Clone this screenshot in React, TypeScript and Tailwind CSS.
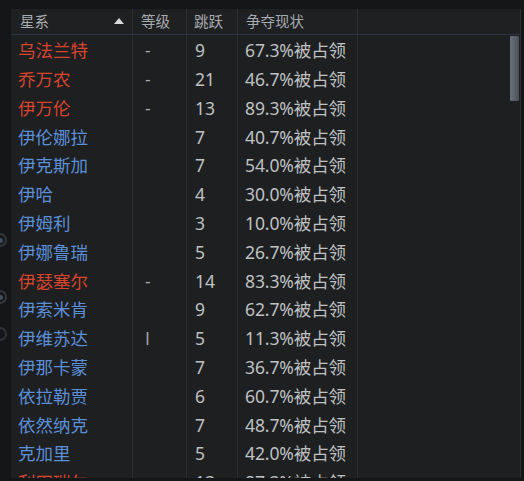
const rows: { name: string; red?: boolean; level: string; jumps: number; status: string }[] = [
  { name: '乌法兰特', red: true, level: '-', jumps: 9, status: '67.3%被占领' },
  { name: '乔万农', red: true, level: '-', jumps: 21, status: '46.7%被占领' },
  { name: '伊万伦', red: true, level: '-', jumps: 13, status: '89.3%被占领' },
  { name: '伊伦娜拉', level: '', jumps: 7, status: '40.7%被占领' },
  { name: '伊克斯加', level: '', jumps: 7, status: '54.0%被占领' },
  { name: '伊哈', level: '', jumps: 4, status: '30.0%被占领' },
  { name: '伊姆利', level: '', jumps: 3, status: '10.0%被占领' },
  { name: '伊娜鲁瑞', level: '', jumps: 5, status: '26.7%被占领' },
  { name: '伊瑟塞尔', red: true, level: '-', jumps: 14, status: '83.3%被占领' },
  { name: '伊索米肯', level: '', jumps: 9, status: '62.7%被占领' },
  { name: '伊维苏达', level: 'I', jumps: 5, status: '11.3%被占领' },
  { name: '伊那卡蒙', level: '', jumps: 7, status: '36.7%被占领' },
  { name: '依拉勒贾', level: '', jumps: 6, status: '60.7%被占领' },
  { name: '依然纳克', level: '', jumps: 7, status: '48.7%被占领' },
  { name: '克加里', level: '', jumps: 5, status: '42.0%被占领' },
  { name: '利田瑞尔', red: true, level: '', jumps: 13, status: '87.3%被占领' },
];

const cols = 'grid grid-cols-[122px_54px_51px_120px_1fr]';

export default function App() {
  return (
    <div
      className="relative h-[481px] w-[524px] overflow-hidden bg-[#151617]"
      style={{ fontFamily: '"Noto Sans", "Noto Sans CJK SC", sans-serif' }}
    >
      {/* faint icons peeking on the left edge */}
      <div className="absolute left-[-7px] top-[233px] flex h-[14px] w-[14px] items-center justify-center rounded-full border-2 border-[#33373b]">
        <div className="h-[5px] w-[5px] rounded-full bg-[#3d4f66]" />
      </div>
      <div className="absolute left-[-7px] top-[290px] flex h-[14px] w-[14px] items-center justify-center rounded-full border-2 border-[#33373b]">
        <div className="h-[5px] w-[5px] rounded-full bg-[#3d4f66]" />
      </div>
      <div className="absolute left-[-7px] top-[327px] h-[14px] w-[14px] rounded-full border-2 border-[#2f3236]" />

      <div className="relative ml-[11px] mt-[9px] flex h-[469px] w-[510px] flex-col overflow-hidden border-r border-[#2c2f33] bg-[#1e1f20]">
        {/* header */}
        <div className={`${cols} h-[26px] shrink-0 border-b border-[#2b3440] bg-[#1f2022] text-[14.5px] text-[#a7abb0]`}>
          <div className="flex items-center justify-between border-r border-[#2a2e33] pl-[9px] pr-[8px]">
            <span>星系</span>
            <svg width="10" height="6" viewBox="0 0 10 6" className="mb-[2px]">
              <path d="M0 6 L5 0 L10 6 Z" fill="#d8dadc" />
            </svg>
          </div>
          <div className="flex items-center border-r border-[#2a2e33] pl-[8px]">等级</div>
          <div className="flex items-center border-r border-[#2a2e33] pl-[7px]">跳跃</div>
          <div className="flex items-center border-r border-[#2a2e33] pl-[8px]">争夺现状</div>
          <div />
        </div>

        {/* body */}
        <div className="relative flex-1 overflow-hidden">
          <div className={`${cols} absolute inset-0`}>
            <div className="border-r border-[#2a2d31]" />
            <div className="border-r border-[#2a2d31]" />
            <div className="border-r border-[#2a2d31]" />
            <div className="border-r border-[#2a2d31]" />
            <div />
          </div>
          <div className="relative pt-[1px]">
            {rows.map((r) => (
              <div key={r.name} className={`${cols} h-[28.8px] items-center text-[17.5px] text-[#bfc1c3]`}>
                <div className={`pl-[7px] ${r.red ? 'text-[#d8452e]' : 'text-[#5b8fd8]'}`}>{r.name}</div>
                <div className="pl-[12px] text-[#a8aaac]" style={{ fontFamily: '"Open Sans", sans-serif' }}>
                  {r.level}
                </div>
                <div className="pl-[8px]">{r.jumps}</div>
                <div className="pl-[7px] tracking-[-0.1px]">{r.status}</div>
                <div />
              </div>
            ))}
          </div>
          {/* scrollbar */}
          <div className="absolute right-[1px] top-[1px] h-[65px] w-[9px] rounded-[1px] bg-gradient-to-r from-[#6a717a] via-[#5b626b] to-[#4a5058]" />
        </div>
      </div>
    </div>
  );
}
